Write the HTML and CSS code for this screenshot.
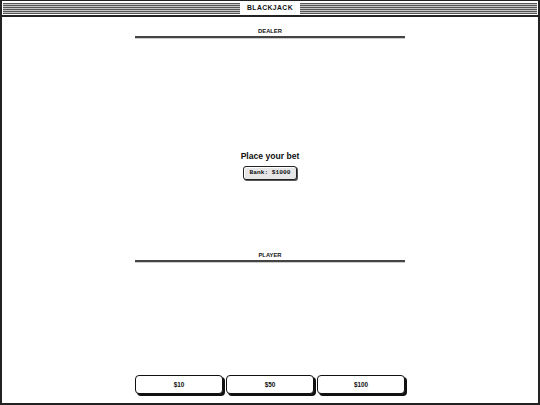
FILE: index.html
```html
<!DOCTYPE html>
<html>
<head>
<meta charset="utf-8">
<link rel="stylesheet" href="styles.css">
</head>
<body>
<div class="window">
  <div class="titlebar">
    <div class="stripes"></div>
    <div class="title">BLACKJACK</div>
    <div class="stripes"></div>
  </div>
  <div class="main">
    <div class="section-head">DEALER</div>
    <div class="dealer-area"></div>
    <div class="status">
      <div class="message">Place your bet</div>
      <div class="bank">Bank: $1000</div>
    </div>
    <div class="section-head player-head">PLAYER</div>
    <div class="player-area"></div>
    <div class="bets">
      <button class="bet">$10</button>
      <button class="bet">$50</button>
      <button class="bet">$100</button>
    </div>
  </div>
</div>
</body>
</html>
```
FILE: styles.css
```css
html, body {
  margin: 0;
  padding: 0;
  background: #fff;
}
.window {
  width: 540px;
  height: 405px;
  box-sizing: border-box;
  border: 2px solid #222;
  border-top-width: 1px;
  display: flex;
  flex-direction: column;
  background: #fff;
  font-family: "Liberation Sans", Arial, sans-serif;
  color: #111;
}
.titlebar {
  height: 16px;
  box-sizing: border-box;
  padding: 2px 1px 1px 1px;
  border-bottom: 2px solid #222;
  display: flex;
  align-items: stretch;
}
.stripes {
  flex: 1;
  background: repeating-linear-gradient(to bottom, #555 0 1px, #c4c4c4 1px 2px);
}
.title {
  background: #fff;
  padding: 0 7px;
  font-size: 6.8px;
  font-weight: bold;
  letter-spacing: 0.4px;
  line-height: 10px;
  margin-bottom: 1px;
}
.main {
  flex: 1;
  display: flex;
  flex-direction: column;
  align-items: center;
}
.section-head {
  width: 270px;
  text-align: center;
  font-size: 5.8px;
  font-weight: bold;
  line-height: 7px;
  padding-top: 11px;
  padding-bottom: 1px;
  border-bottom: 2px solid #444;
  box-shadow: 0 1px 0 #ccc;
}
.dealer-area {
  height: 113px;
}
.status {
  display: flex;
  flex-direction: column;
  align-items: center;
}
.message {
  font-size: 8.6px;
  font-weight: bold;
  line-height: 10px;
}
.bank {
  margin-top: 5px;
  width: 54px;
  height: 14px;
  box-sizing: border-box;
  border: 1px solid #222;
  border-radius: 3px;
  background: #e6e6e6;
  box-shadow: inset 1px 1px 0 #fff, 1px 1px 0 #555;
  font-family: "Liberation Mono", "Courier New", monospace;
  font-size: 6.2px;
  font-weight: bold;
  line-height: 12px;
  text-align: center;
}
.player-head {
  margin-top: 61px;
}
.player-area {
  flex: 1;
}
.bets {
  width: 270px;
  display: flex;
  gap: 3px;
  margin-bottom: 9px;
}
.bet {
  flex: 1;
  height: 19px;
  margin: 0;
  padding: 0;
  border: 1px solid #111;
  border-radius: 4px;
  background: #fff;
  box-shadow: 2px 2px 0 #111;
  font-family: "Liberation Sans", Arial, sans-serif;
  font-size: 6.4px;
  font-weight: bold;
  color: #111;
}
```
